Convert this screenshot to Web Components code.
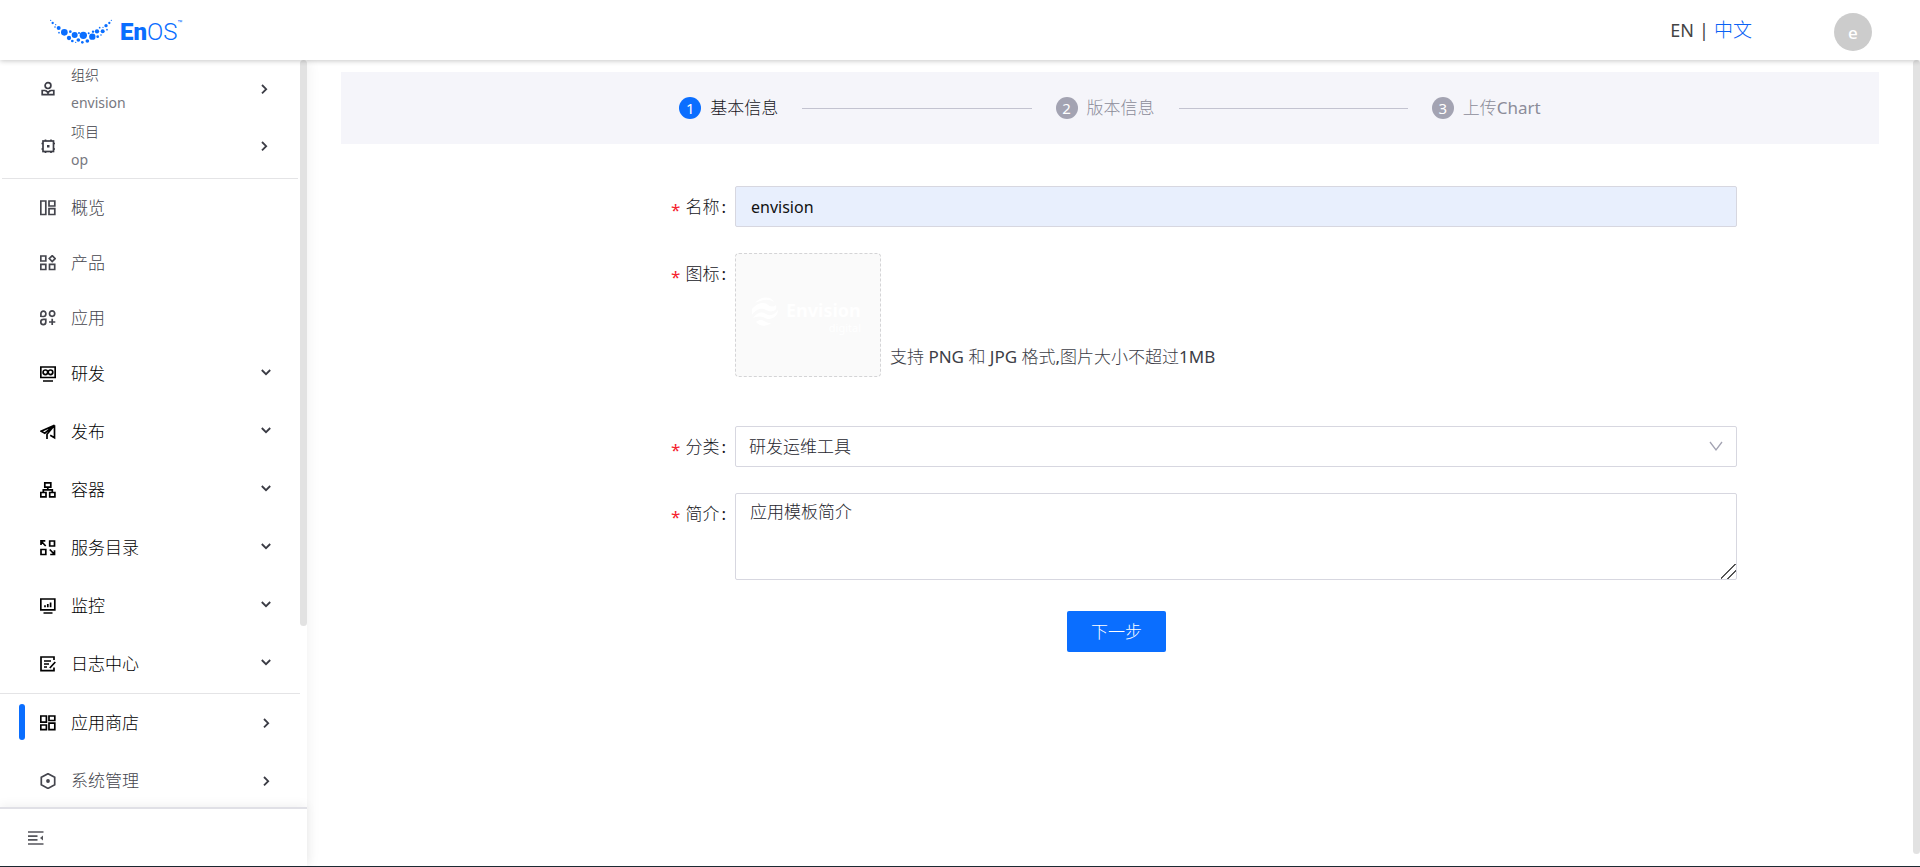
<!DOCTYPE html>
<html lang="zh-CN">
<head>
<meta charset="utf-8">
<title>EnOS</title>
<style>
  html, body { height: 100%; margin: 0; }
  body {
    background: #fff;
    color: #26262e;
    font: 400 17px/26px "Noto Sans", "Noto Sans CJK SC Light", "Noto Sans CJK SC", sans-serif;
    overflow: hidden;
  }
</style>
</head>
<body>
<enos-app></enos-app>

<template id="t-app">
  <style>
    :host { display: grid; grid-template: 60px minmax(0, 1fr) / 307px minmax(0, 1fr); height: 100vh; box-sizing: border-box; border-bottom: 1px solid #1d2a33; }
    enos-header { grid-column: 1 / 3; z-index: 2; }
    enos-sidebar { z-index: 1; min-height: 0; }
    main { display: flex; min-width: 0; min-height: 0; }
    .content { flex: 1; min-width: 0; padding: 12px 34px; }
    .thumb { width: 7px; margin-bottom: 12px; border-radius: 4px; background: #e2e2e2; }
  </style>
  <enos-header></enos-header>
  <enos-sidebar></enos-sidebar>
  <main>
    <div class="content">
      <step-bar>
        <step-item number="1" current>基本信息</step-item>
        <step-item number="2">版本信息</step-item>
        <step-item number="3">上传Chart</step-item>
      </step-bar>
      <template-form></template-form>
    </div>
    <div class="thumb"></div>
  </main>
</template>

<template id="t-header">
  <style>
    :host { display: flex; align-items: center; padding: 0 48px 0 50px; background: #fff; box-shadow: 0 1px 5px rgba(0, 0, 0, .22); }
    .logo { display: flex; align-items: center; gap: 7px; color: #0a6eff; text-decoration: none; }
    .logo svg { width: 63px; height: 26px; margin-top: 4px; fill: currentColor; }
    .word { display: flex; font: 300 24px/28px Roboto, sans-serif; margin-top: 4px; }
    .word b { font-weight: 900; }
    .word small { font: 400 8px/12px Roboto, sans-serif; }
    .lang { display: flex; gap: 5px; margin-left: auto; font-size: 18px; line-height: 26px; color: #444; }
    .lang a { color: inherit; text-decoration: none; }
    .lang a.on { color: #0a62f5; font-size: 19px; }
    button { width: 38px; height: 38px; margin: 4px 0 0 82px; padding: 2px 0 0; border: 0; border-radius: 50%; background: #ccc; color: #fff; font: 500 17px/26px "Noto Sans", sans-serif; }
  </style>
  <a class="logo" href="#">
    <svg viewBox="150 58 189 78" aria-hidden="true">
      <circle cx="152" cy="62" r="2"/><circle cx="158" cy="70" r="3.5"/><circle cx="167" cy="75" r="2"/><circle cx="165" cy="82" r="2.5"/>
      <circle cx="176" cy="85" r="6"/><circle cx="177" cy="99" r="2.5"/><circle cx="193" cy="98" r="10"/><circle cx="211" cy="96" r="4"/>
      <circle cx="207" cy="115" r="6.5"/><circle cx="217" cy="124" r="4"/><circle cx="224" cy="106" r="9"/><circle cx="237" cy="100" r="3"/>
      <circle cx="235" cy="121" r="5.5"/><circle cx="227" cy="128" r="2"/><circle cx="250" cy="107" r="11"/><circle cx="247" cy="128" r="4"/>
      <circle cx="266" cy="101" r="3"/><circle cx="262" cy="124" r="5.5"/><circle cx="277" cy="111" r="9.5"/><circle cx="279" cy="96" r="3.5"/>
      <circle cx="291" cy="95" r="6.5"/><circle cx="293" cy="111" r="4"/><circle cx="299" cy="84" r="2.5"/><circle cx="308" cy="95" r="6"/>
      <circle cx="303" cy="106" r="2.5"/><circle cx="309" cy="83" r="2"/><circle cx="318" cy="78" r="5"/><circle cx="321" cy="90" r="2.5"/>
      <circle cx="328" cy="70" r="3.5"/><circle cx="334" cy="62" r="2"/>
    </svg>
    <span class="word"><b>En</b><span>OS</span><small>™</small></span>
  </a>
  <nav class="lang"><a href="#">EN</a><span>|</span><a class="on" href="#">中文</a></nav>
  <button type="button" aria-label="账户">e</button>
</template>

<template id="t-sidebar">
  <style>
    :host { display: flex; flex-direction: column; background: #fff; box-shadow: 0 0 14px rgba(0, 0, 0, .07); }
    .view { flex: 1; min-height: 0; display: flex; align-items: flex-start; overflow: hidden; }
    nav { flex: 1; min-width: 0; }
    .thumb { width: 7px; height: 566px; border-radius: 4px; background: #e2e2e2; }
    hr { border: 0; border-top: 1px solid #e4e4e6; margin: 0; }
    hr.first { margin: 4px 2px 1px; }
    footer { height: 57px; flex: none; display: flex; align-items: center; padding-left: 28px; border-top: 2px solid #e0e0e6; box-shadow: 0 -2px 10px rgba(0, 0, 0, .06); }
    footer button { display: flex; padding: 0; border: 0; background: none; color: #55565c; }
  </style>
  <div class="view">
    <nav>
      <scope-item icon="org" label="组织">envision</scope-item>
      <scope-item icon="chip" label="项目">op</scope-item>
      <hr class="first">
      <nav-item icon="overview">概览</nav-item>
      <nav-item icon="product">产品</nav-item>
      <nav-item icon="apps">应用</nav-item>
      <nav-item group arrow="down" icon="dev">研发</nav-item>
      <nav-item group arrow="down" icon="send">发布</nav-item>
      <nav-item group arrow="down" icon="container">容器</nav-item>
      <nav-item group arrow="down" icon="catalog">服务目录</nav-item>
      <nav-item group arrow="down" icon="monitor">监控</nav-item>
      <nav-item group arrow="down" icon="log">日志中心</nav-item>
      <hr>
      <nav-item group active arrow="right" icon="store">应用商店</nav-item>
      <nav-item tall arrow="right" icon="system">系统管理</nav-item>
    </nav>
    <div class="thumb"></div>
  </div>
  <footer><button type="button" aria-label="收起菜单"><enos-icon name="fold"></enos-icon></button></footer>
</template>

<template id="t-scope">
  <style>
    :host { display: block; height: 57px; color: #3c3d46; }
    a { display: grid; grid-template-columns: 16px 1fr 16px; column-gap: 15px; align-items: center; height: 57px; padding: 1px 28px 0 40px; color: inherit; text-decoration: none; box-sizing: border-box; }
    .text { display: flex; flex-direction: column; font-size: 14px; line-height: 28px; }
    .value { color: #77787f; }
  </style>
  <a href="#"><enos-icon></enos-icon><span class="text"><span class="label"></span><span class="value"><slot></slot></span></span><enos-icon name="right"></enos-icon></a>
</template>

<template id="t-nav">
  <style>
    :host { display: block; color: #44454d; }
    a { position: relative; display: grid; grid-template-columns: 16px 1fr 16px; column-gap: 15px; align-items: center; height: 55px; padding: 0 26px 0 40px; color: inherit; text-decoration: none; box-sizing: border-box; }
    :host([group]) { color: #000; }
    :host([group]) a, :host([tall]) a { height: 58px; }
    .arrow { color: #3a3b44; }
    :host([arrow="down"]) .arrow { margin-bottom: 4px; }
    :host([active]) a::before { content: ""; position: absolute; left: 19px; top: 10px; width: 6px; height: 36px; border-radius: 3px; background: #0a6eff; }
  </style>
  <a href="#"><enos-icon class="lead"></enos-icon><span><slot></slot></span><enos-icon class="arrow"></enos-icon></a>
</template>

<template id="t-stepbar">
  <style>
    :host { display: flex; align-items: center; gap: 24px; height: 72px; padding: 0 22%; box-sizing: border-box; background: #f5f5fa; }
    .line { flex: 1; height: 1px; background: #c3c3d0; }
  </style>
</template>

<template id="t-step">
  <style>
    :host { display: flex; align-items: center; gap: 9px; color: #8c8c99; white-space: nowrap; }
    .dot { width: 22px; height: 22px; border-radius: 50%; background: #a3a3b2; color: #fff; font-size: 15px; line-height: 22px; text-align: center; }
    :host([current]) { color: #16161c; }
    :host([current]) .dot { background: #0a6eff; }
  </style>
  <span class="dot"></span><span><slot></slot></span>
</template>

<template id="t-row">
  <style>
    :host { display: grid; grid-template-columns: 394fr 1002fr 142fr; color: #16161c; }
    .label { display: flex; justify-content: flex-end; align-items: center; height: 41px; padding-right: 9px; }
    .star { padding: 6px 5px 0 0; color: #f5222d; }
    .colon { padding-left: 2px; }
    .control { display: flex; align-items: flex-end; min-width: 0; }
  </style>
  <div class="label"><span class="star">*</span><slot name="label"></slot><span class="colon">:</span></div>
  <div class="control"><slot></slot></div>
</template>

<template id="t-form">
  <style>
    :host { display: block; padding-top: 42px; }
    form { display: flex; flex-direction: column; gap: 26px; }
    input.text, select, textarea { display: block; width: 100%; box-sizing: border-box; margin: 0; border: 1px solid #d7d7e0; border-radius: 2px; background: #fff; color: #26262e; font: inherit; }
    input.text { height: 41px; padding: 0 15px; background: #e8effd; font-size: 16px; color: #111; }
    .select { position: relative; display: block; width: 100%; }
    select { height: 41px; padding: 0 13px; appearance: none; }
    .select enos-icon { position: absolute; right: 13px; top: 12px; color: #a3a3b2; pointer-events: none; }
    textarea { height: 87px; padding: 5px 14px; resize: vertical; }
    textarea::-webkit-resizer { background: linear-gradient(135deg, transparent 46%, #555 46%, #555 51%, transparent 51%, transparent 70%, #555 70%, #555 75%, transparent 75%); }
    .upload { position: relative; display: flex; align-items: center; justify-content: center; width: 146px; height: 124px; box-sizing: border-box; border: 1px dashed #d4d4d6; border-radius: 4px; background: #fafafa; }
    .upload svg { width: 114px; height: 42px; fill: #fff; }
    .upload input { position: absolute; inset: 0; width: 100%; opacity: 0; font-size: 0; }
    .hint { margin: 0 0 7px 9px; color: #3c3d46; }
    .upload-row { margin-bottom: 23px; }
    .actions { display: flex; justify-content: center; padding: 5px 0 0 13px; }
    .actions button { height: 41px; padding: 0 24px; border: 0; border-radius: 2px; background: #0a6eff; color: #fff; font: inherit; }
  </style>
  <form>
    <form-row><label slot="label" for="name">名称</label><input class="text" id="name" type="text" value="envision"></form-row>
    <form-row class="upload-row"><label slot="label" for="icon">图标</label>
      <label class="upload"><input id="icon" type="file" accept="image/png,image/jpeg">
        <svg viewBox="0 0 114 42" role="img" aria-label="Envision digital">
          <path d="M4 9C9 2 20 2 23 8C17 4 10 6 4 9Z"/><path d="M1 15C7 8 14 8 17 11C20 13 23 13 25 11C27 17 20 19 15 16C10 13 4 16 1 21Z"/><path d="M2 24C7 17 12 18 15 20C20 23 24 20 27 16C27 23 19 27 14 24C9 21 5 23 2 24Z"/><path d="M5 28C9 25 12 26 15 28C18 30 21 29 22 27C18 33 9 33 5 28Z"/>
          <text x="35" y="23" font-family="Noto Sans, sans-serif" font-weight="700" font-size="18">Envision</text>
          <text x="110" y="38" text-anchor="end" font-family="Noto Sans, sans-serif" font-size="11">digital</text>
        </svg>
      </label>
      <span class="hint">支持 PNG 和 JPG 格式,图片大小不超过1MB</span>
    </form-row>
    <form-row><label slot="label" for="category">分类</label>
      <span class="select"><select id="category"><option>研发运维工具</option></select><enos-icon name="caret"></enos-icon></span>
    </form-row>
    <form-row><label slot="label" for="summary">简介</label><textarea id="summary">应用模板简介</textarea></form-row>
    <div class="actions"><button type="button">下一步</button></div>
  </form>
</template>

<script>
  const ICONS = {
    org: '<circle cx="8" cy="4.6" r="2.9"/><path d="M5.5 9.5H2.2v4.2h11.6V9.5H10.5M5.5 9.5L8 11.5l2.5-2M8 11v3"/>',
    chip: '<rect x="3" y="3" width="10.5" height="10.5"/><path d="M5.5 3V1.500M11 3V1.500M5.500 15v-1.500M11 15v-1.500M3 5.500H1.500M3 11H1.500M15 5.500h-1.500M15 11h-1.500"/><rect x="7" y="7" width="2.500" height="2.500" fill="currentColor" stroke="none"/>',
    overview: '<path d="M.8 1h5v13.500h-5zM9 1h5.800v5H9zM9 8.700h5.800v5.800H9z"/>',
    product: '<path d="M.8 1h5v5h-5zM.8 9.300h5v5.200h-5zM9.500 9.300h5.200v5.200H9.500zM12.200.7l2.900 2.900-2.900 2.900-2.900-2.900z"/>',
    apps: '<path d="M.9 6.300V3.800a2.500 2.700 0 1 1 2.500 2.700zM14.700 3.600a2.600 2.700 0 1 1-2.600-2.700 2.600 2.700 0 0 1 2.600 2.700zM5.800 9.300v2.800a2.500 2.600 0 1 1-2.500-2.700zM12.200 8.800v6.200M9 12h6.300"/>',
    dev: '<path d="M.8 1h14.400v10.500H.8zM3 15h10"/><circle cx="5.400" cy="6.300" r="2.300"/><circle cx="10.500" cy="6.300" r="2.300"/>',
    send: '<path d="M14.500 1.200L1.200 7.200l3.600 2 9.700-8zM14.500 1.200v12.500l-4.300-2.400M14.500 1.200L7 10.200v4.800"/>',
    container: '<path d="M4.800.8h6v4.400h-6zM.8 10.500h5.200v4.300H.8zM9.700 10.500h5.200v4.300H9.700zM7.800 5.200v2.500M3.300 10.500V7.800h9v2.700"/>',
    catalog: '<path d="M9.700 1h4.800v5H9.700zM1 9.500h4.800v5H1zM1 5V.9h4.300M1 1l4.700 5M14.500 10.300v4.200h-4.300M14.500 14.500l-4.700-5"/>',
    monitor: '<path d="M.8 1h14v10.800H.8zM3.500 15h9M5 9.300V7.300M7.800 9.300V6M10.600 9.300V4.500"/>',
    log: '<path d="M14 4V1H1v13.700h13V11.500M4 5h7M4 8h5M4 11h3M15.300 6l-5.500 6"/>',
    store: '<path d="M.8 1h5.600v6.200H.8zM9 1h5.800v4.500H9zM.8 10h5.600v4.600H.8zM9 8.200h5.800v6.400H9z"/>',
    system: '<path d="M8 .7l6.700 3.600v7.500L8 15.400 1.300 11.800V4.300z"/><circle cx="8" cy="8" r="1.900" fill="currentColor" stroke="none"/>',
    fold: '<path d="M0 2h15.500M0 6.200h9.500M0 9.800h9.500M0 14h15.500"/><path d="M15 5.500v5L12 8z" fill="currentColor" stroke="none"/>',
    right: '<path d="M6 4l4.200 4.200L6 12.400" stroke-width="1.800"/>',
    down: '<path d="M3.800 6l4.200 4.200L12.200 6" stroke-width="1.800"/>',
    caret: '<path d="M2 4l6 8 6-8" stroke-width="1.300"/>'
  };

  const stamp = (host, id) => {
    const root = host.attachShadow({ mode: "open" });
    root.append(document.getElementById(id).content.cloneNode(true));
    return root;
  };

  customElements.define("enos-icon", class extends HTMLElement {
    static observedAttributes = ["name"];
    constructor() { super(); this.attachShadow({ mode: "open" }); }
    attributeChangedCallback(_, __, name) {
      this.shadowRoot.innerHTML = `<style>:host{display:block;width:16px;height:16px}svg{display:block;width:16px;height:16px;fill:none;stroke:currentColor;stroke-width:1.7}</style><svg viewBox="0 0 16 16" aria-hidden="true">${ICONS[name] || ""}</svg>`;
    }
  });

  customElements.define("scope-item", class extends HTMLElement {
    connectedCallback() {
      if (this.shadowRoot) return;
      const root = stamp(this, "t-scope");
      root.querySelector("enos-icon").setAttribute("name", this.getAttribute("icon"));
      root.querySelector(".label").textContent = this.getAttribute("label");
    }
  });

  customElements.define("nav-item", class extends HTMLElement {
    connectedCallback() {
      if (this.shadowRoot) return;
      const root = stamp(this, "t-nav");
      root.querySelector(".lead").setAttribute("name", this.getAttribute("icon"));
      const arrow = this.getAttribute("arrow");
      if (arrow) root.querySelector(".arrow").setAttribute("name", arrow);
    }
  });

  customElements.define("step-item", class extends HTMLElement {
    connectedCallback() {
      if (this.shadowRoot) return;
      stamp(this, "t-step").querySelector(".dot").textContent = this.getAttribute("number");
    }
  });

  customElements.define("step-bar", class extends HTMLElement {
    connectedCallback() {
      if (this.shadowRoot) return;
      const root = stamp(this, "t-stepbar");
      [...this.children].forEach((step, i) => {
        if (i) {
          const line = document.createElement("span");
          line.className = "line";
          root.append(line);
        }
        const slot = document.createElement("slot");
        slot.name = step.slot = "step-" + i;
        root.append(slot);
      });
    }
  });

  for (const [tag, id] of [["form-row", "t-row"], ["template-form", "t-form"], ["enos-header", "t-header"], ["enos-sidebar", "t-sidebar"], ["enos-app", "t-app"]]) {
    customElements.define(tag, class extends HTMLElement {
      connectedCallback() { if (!this.shadowRoot) stamp(this, id); }
    });
  }
</script>
</body>
</html>
